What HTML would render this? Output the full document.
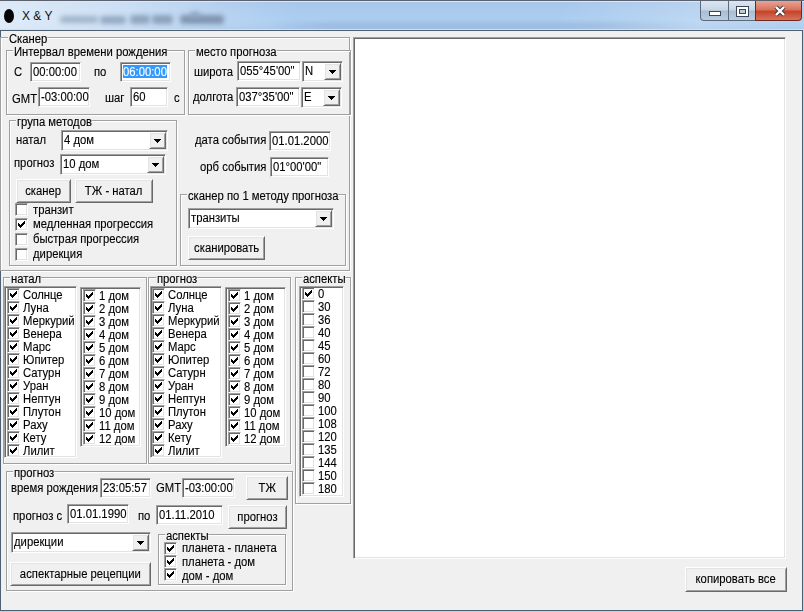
<!DOCTYPE html><html><head><meta charset="utf-8"><style>
*{margin:0;padding:0;box-sizing:border-box}
html,body{width:804px;height:612px;overflow:hidden;background:#bcd3ec;font-family:"Liberation Sans",sans-serif;font-size:12px;color:#000;position:relative}
div,svg{position:absolute}
#tb{left:0;top:0;width:804px;height:30px;border-top:1px solid #2c2f3a;background:linear-gradient(to bottom, rgba(255,255,255,0) 0, rgba(255,255,255,0) 100%), linear-gradient(to right, rgba(244,248,253,.7) 0, rgba(244,248,253,.5) 110px, rgba(244,248,253,.15) 230px, rgba(240,246,252,0) 300px, rgba(240,246,252,0) 560px, rgba(240,246,252,.25) 700px, rgba(240,246,252,.1) 804px), linear-gradient(#a6c6ea 0, #aacbee 40%, #accef0 70%, #a7c7e9 100%);box-shadow:inset 0 1px 0 #dbe8f6, inset 0 -1px 0 #cfe0f2}
#tb:before{content:"";position:absolute;left:0;top:-1px;width:804px;height:1px;background:#5c6170}
#band{left:270px;top:19px;width:420px;height:10px;background:linear-gradient(to bottom, rgba(70,100,140,0) 0, rgba(70,100,140,.13) 60%, rgba(70,100,140,.08) 100%);-webkit-mask-image:linear-gradient(to right, transparent 0, #000 60px, #000 330px, transparent 420px)}
#ico{left:4px;top:9px;width:10px;height:14px;border-radius:50%;background:#050505}
#ttl{left:22px;top:9px;font-size:12px;line-height:14px;color:#101010}
.blb{filter:blur(2.6px);border-radius:3px}
.tbtn{top:1px;height:20px;border:1px solid #5a6a7c;border-top:none;background:linear-gradient(#dce6f2 0%,#c8d6e6 45%,#a9bdd4 55%,#b9cce0 100%)}
.cls{background:linear-gradient(#e8a494 0%,#d9735e 45%,#c7432a 55%,#d6735a 100%);border-color:#6e2a20;border-bottom-right-radius:4px}
#minI{left:8px;top:10px;width:12px;height:5px;background:#fff;border:1px solid #3c4656}
#maxI{left:7px;top:5px;width:13px;height:11px;background:#fff;border:1px solid #3c4656}
#maxI:after{content:"";position:absolute;left:2px;top:2px;width:7px;height:5px;border:1px solid #3c4656;background:#b9cbe0;box-sizing:border-box}
#frame{left:0;top:30px;width:803px;height:581px;background:#f0f0f0;border:1px solid #4e5f72}
.gb{border:1px solid #a0a0a0;box-shadow:1px 1px 0 #fff, inset 1px 1px 0 #fff}
.t{line-height:13px;white-space:nowrap;-webkit-text-stroke:0.12px #000;transform:scaleX(0.94);transform-origin:0 0}
.cap{background:#f0f0f0;padding:0 0 0 1px;margin-left:-1px}
.tc{text-align:center;transform:none}
.tc span{display:inline-block;-webkit-text-stroke:0.12px #000;transform:scaleX(0.94);transform-origin:50% 0}
.sk{border-style:solid;border-width:1px;border-color:#a0a0a0 #fff #fff #a0a0a0;box-shadow:inset 1px 1px 0 #696969, inset -1px -1px 0 #e3e3e3}
.bt{background:#f0f0f0;border-style:solid;border-width:1px;border-color:#fff #696969 #696969 #fff;box-shadow:inset 1px 1px 0 #e3e3e3, inset -1px -1px 0 #a0a0a0}
.arr{fill:#000}
.cb{width:13px;height:13px;background:#fff;border-style:solid;border-width:1px;border-color:#a0a0a0 #fff #fff #a0a0a0;box-shadow:inset 1px 1px 0 #696969, inset -1px -1px 0 #e3e3e3}
.ck{left:2px;top:2px;fill:#000}
</style></head><body><div id="tb"></div>
<div id="band"></div>
<div id="ico"></div>
<div id="ttl">X &amp; Y</div>
<div class="blb" style="left:60px;top:16px;width:38px;height:7px;background:#9fb3ca"></div>
<div class="blb" style="left:100px;top:16px;width:26px;height:8px;background:#93a8c2"></div>
<div class="blb" style="left:130px;top:15px;width:20px;height:9px;background:#8ea3bd"></div>
<div class="blb" style="left:152px;top:15px;width:21px;height:9px;background:#8ba0ba"></div>
<div class="blb" style="left:180px;top:15px;width:44px;height:9px;background:#7f94b0"></div>
<div class="blb" style="left:190px;top:12px;width:10px;height:6px;background:#8fa4be"></div>
<div class="tbtn" style="left:700px;width:29px;border-bottom-left-radius:4px"><div id="minI"></div></div>
<div class="tbtn" style="left:728px;width:28px"><div id="maxI"></div></div>
<div class="tbtn cls" style="left:755px;width:47px"><svg width="14" height="12" viewBox="0 0 14 12" style="position:absolute;left:17px;top:4px"><path d="M3 2 L11 10 M11 2 L3 10" stroke="#3b3b3b" stroke-width="4.2"/><path d="M3 2 L11 10 M11 2 L3 10" stroke="#fff" stroke-width="2.4"/></svg></div>
<div id="frame"></div>
<div class="gb" style="left:0px;top:37px;width:350px;height:234px"></div>
<div class="t cap" style="left:9px;top:33px">Сканер</div>
<div class="gb" style="left:6px;top:50px;width:179px;height:65px"></div>
<div class="t cap" style="left:14px;top:46px">Интервал времени рождения</div>
<div class="t" style="left:14px;top:66px">С</div>
<div class="sk" style="left:30px;top:62px;width:51px;height:20px;background:#fff"></div>
<div class="t" style="left:33px;top:66px;">00:00:00</div>
<div class="t" style="left:94px;top:66px">по</div>
<div class="sk" style="left:120px;top:62px;width:51px;height:20px;background:#fff"></div>
<div style="left:123px;top:65px;width:44px;height:13px;background:#3399ff"></div>
<div class="t" style="left:123px;top:66px;color:#fff;-webkit-text-stroke:0.12px #fff">06:00:00</div>
<div class="t" style="left:12px;top:93px">GMT</div>
<div class="sk" style="left:38px;top:87px;width:52px;height:20px;background:#fff"></div>
<div class="t" style="left:41px;top:91px;">-03:00:00</div>
<div class="t" style="left:105px;top:92px">шаг</div>
<div class="sk" style="left:130px;top:87px;width:38px;height:20px;background:#fff"></div>
<div class="t" style="left:133px;top:91px;">60</div>
<div class="t" style="left:174px;top:92px">с</div>
<div class="gb" style="left:188px;top:50px;width:163px;height:65px"></div>
<div class="t cap" style="left:196px;top:46px">место прогноза</div>
<div class="t" style="left:194px;top:66px">широта</div>
<div class="sk" style="left:237px;top:61px;width:64px;height:20px;background:#fff"></div>
<div class="t" style="left:240px;top:65px;">055°45'00"</div>
<div class="sk" style="left:302px;top:61px;width:41px;height:21px;background:#fff"></div>
<div class="bt" style="left:324px;top:63px;width:17px;height:17px"></div>
<svg class="arr" style="left:329px;top:70px" width="7" height="4" shape-rendering="crispEdges"><rect x="0" y="0" width="7" height="1"/><rect x="1" y="1" width="5" height="1"/><rect x="2" y="2" width="3" height="1"/><rect x="3" y="3" width="1" height="1"/></svg>
<div class="t" style="left:305px;top:65px">N</div>
<div class="t" style="left:193px;top:91px">долгота</div>
<div class="sk" style="left:236px;top:87px;width:64px;height:20px;background:#fff"></div>
<div class="t" style="left:239px;top:91px;">037°35'00"</div>
<div class="sk" style="left:301px;top:87px;width:41px;height:21px;background:#fff"></div>
<div class="bt" style="left:323px;top:89px;width:17px;height:17px"></div>
<svg class="arr" style="left:328px;top:96px" width="7" height="4" shape-rendering="crispEdges"><rect x="0" y="0" width="7" height="1"/><rect x="1" y="1" width="5" height="1"/><rect x="2" y="2" width="3" height="1"/><rect x="3" y="3" width="1" height="1"/></svg>
<div class="t" style="left:304px;top:91px">E</div>
<div class="gb" style="left:9px;top:120px;width:168px;height:146px"></div>
<div class="t cap" style="left:17px;top:116px">група методов</div>
<div class="t" style="left:16px;top:134px">натал</div>
<div class="sk" style="left:61px;top:130px;width:107px;height:21px;background:#fff"></div>
<div class="bt" style="left:149px;top:132px;width:17px;height:17px"></div>
<svg class="arr" style="left:154px;top:139px" width="7" height="4" shape-rendering="crispEdges"><rect x="0" y="0" width="7" height="1"/><rect x="1" y="1" width="5" height="1"/><rect x="2" y="2" width="3" height="1"/><rect x="3" y="3" width="1" height="1"/></svg>
<div class="t" style="left:64px;top:134px">4 дом</div>
<div class="t" style="left:14px;top:157px">прогноз</div>
<div class="sk" style="left:60px;top:154px;width:106px;height:21px;background:#fff"></div>
<div class="bt" style="left:147px;top:156px;width:17px;height:17px"></div>
<svg class="arr" style="left:152px;top:163px" width="7" height="4" shape-rendering="crispEdges"><rect x="0" y="0" width="7" height="1"/><rect x="1" y="1" width="5" height="1"/><rect x="2" y="2" width="3" height="1"/><rect x="3" y="3" width="1" height="1"/></svg>
<div class="t" style="left:63px;top:158px">10 дом</div>
<div class="bt" style="left:16px;top:179px;width:55px;height:24px"></div>
<div class="t tc" style="left:16px;top:185px;width:55px"><span>сканер</span></div>
<div class="bt" style="left:75px;top:179px;width:78px;height:24px"></div>
<div class="t tc" style="left:75px;top:185px;width:78px"><span>ТЖ - натал</span></div>
<div class="cb" style="left:15px;top:203px"></div>
<div class="t" style="left:33px;top:204px">транзит</div>
<div class="cb" style="left:15px;top:218px"><svg class="ck" width="7" height="7" shape-rendering="crispEdges"><rect x="6" y="0" width="1" height="1"/><rect x="5" y="1" width="2" height="1"/><rect x="0" y="2" width="1" height="1"/><rect x="4" y="2" width="3" height="1"/><rect x="0" y="3" width="2" height="1"/><rect x="3" y="3" width="3" height="1"/><rect x="0" y="4" width="5" height="1"/><rect x="1" y="5" width="3" height="1"/><rect x="2" y="6" width="1" height="1"/></svg></div>
<div class="t" style="left:33px;top:218px">медленная прогрессия</div>
<div class="cb" style="left:15px;top:233px"></div>
<div class="t" style="left:33px;top:233px">быстрая прогрессия</div>
<div class="cb" style="left:15px;top:248px"></div>
<div class="t" style="left:33px;top:248px">дирекция</div>
<div class="bt" style="left:16px;top:179px;width:55px;height:24px"></div>
<div class="t tc" style="left:16px;top:185px;width:55px"><span>сканер</span></div>
<div class="bt" style="left:75px;top:179px;width:78px;height:24px"></div>
<div class="t tc" style="left:75px;top:185px;width:78px"><span>ТЖ - натал</span></div>
<div class="t" style="left:195px;top:134px">дата события</div>
<div class="sk" style="left:269px;top:131px;width:62px;height:20px;background:#fff"></div>
<div class="t" style="left:272px;top:135px;">01.01.2000</div>
<div class="t" style="left:200px;top:161px">орб события</div>
<div class="sk" style="left:270px;top:157px;width:59px;height:20px;background:#fff"></div>
<div class="t" style="left:273px;top:161px;">01°00'00"</div>
<div class="gb" style="left:180px;top:194px;width:166px;height:72px"></div>
<div class="t cap" style="left:188px;top:190px">сканер по 1 методу прогноза</div>
<div class="sk" style="left:188px;top:208px;width:146px;height:21px;background:#fff"></div>
<div class="bt" style="left:315px;top:210px;width:17px;height:17px"></div>
<svg class="arr" style="left:320px;top:217px" width="7" height="4" shape-rendering="crispEdges"><rect x="0" y="0" width="7" height="1"/><rect x="1" y="1" width="5" height="1"/><rect x="2" y="2" width="3" height="1"/><rect x="3" y="3" width="1" height="1"/></svg>
<div class="t" style="left:191px;top:212px">транзиты</div>
<div class="bt" style="left:188px;top:236px;width:77px;height:24px"></div>
<div class="t tc" style="left:188px;top:242px;width:77px"><span>сканировать</span></div>
<div class="gb" style="left:3px;top:277px;width:144px;height:187px"></div>
<div class="t cap" style="left:11px;top:273px">натал</div>
<div class="sk" style="left:4px;top:286px;width:73px;height:172px;background:#fff"></div>
<div style="left:6px;top:288px;width:69px;height:168px;overflow:hidden"><div class="cb" style="left:1px;top:0px"><svg class="ck" width="7" height="7" shape-rendering="crispEdges"><rect x="6" y="0" width="1" height="1"/><rect x="5" y="1" width="2" height="1"/><rect x="0" y="2" width="1" height="1"/><rect x="4" y="2" width="3" height="1"/><rect x="0" y="3" width="2" height="1"/><rect x="3" y="3" width="3" height="1"/><rect x="0" y="4" width="5" height="1"/><rect x="1" y="5" width="3" height="1"/><rect x="2" y="6" width="1" height="1"/></svg></div><div class="t" style="left:17px;top:1px">Солнце</div><div class="cb" style="left:1px;top:13px"><svg class="ck" width="7" height="7" shape-rendering="crispEdges"><rect x="6" y="0" width="1" height="1"/><rect x="5" y="1" width="2" height="1"/><rect x="0" y="2" width="1" height="1"/><rect x="4" y="2" width="3" height="1"/><rect x="0" y="3" width="2" height="1"/><rect x="3" y="3" width="3" height="1"/><rect x="0" y="4" width="5" height="1"/><rect x="1" y="5" width="3" height="1"/><rect x="2" y="6" width="1" height="1"/></svg></div><div class="t" style="left:17px;top:14px">Луна</div><div class="cb" style="left:1px;top:26px"><svg class="ck" width="7" height="7" shape-rendering="crispEdges"><rect x="6" y="0" width="1" height="1"/><rect x="5" y="1" width="2" height="1"/><rect x="0" y="2" width="1" height="1"/><rect x="4" y="2" width="3" height="1"/><rect x="0" y="3" width="2" height="1"/><rect x="3" y="3" width="3" height="1"/><rect x="0" y="4" width="5" height="1"/><rect x="1" y="5" width="3" height="1"/><rect x="2" y="6" width="1" height="1"/></svg></div><div class="t" style="left:17px;top:27px">Меркурий</div><div class="cb" style="left:1px;top:39px"><svg class="ck" width="7" height="7" shape-rendering="crispEdges"><rect x="6" y="0" width="1" height="1"/><rect x="5" y="1" width="2" height="1"/><rect x="0" y="2" width="1" height="1"/><rect x="4" y="2" width="3" height="1"/><rect x="0" y="3" width="2" height="1"/><rect x="3" y="3" width="3" height="1"/><rect x="0" y="4" width="5" height="1"/><rect x="1" y="5" width="3" height="1"/><rect x="2" y="6" width="1" height="1"/></svg></div><div class="t" style="left:17px;top:40px">Венера</div><div class="cb" style="left:1px;top:52px"><svg class="ck" width="7" height="7" shape-rendering="crispEdges"><rect x="6" y="0" width="1" height="1"/><rect x="5" y="1" width="2" height="1"/><rect x="0" y="2" width="1" height="1"/><rect x="4" y="2" width="3" height="1"/><rect x="0" y="3" width="2" height="1"/><rect x="3" y="3" width="3" height="1"/><rect x="0" y="4" width="5" height="1"/><rect x="1" y="5" width="3" height="1"/><rect x="2" y="6" width="1" height="1"/></svg></div><div class="t" style="left:17px;top:53px">Марс</div><div class="cb" style="left:1px;top:65px"><svg class="ck" width="7" height="7" shape-rendering="crispEdges"><rect x="6" y="0" width="1" height="1"/><rect x="5" y="1" width="2" height="1"/><rect x="0" y="2" width="1" height="1"/><rect x="4" y="2" width="3" height="1"/><rect x="0" y="3" width="2" height="1"/><rect x="3" y="3" width="3" height="1"/><rect x="0" y="4" width="5" height="1"/><rect x="1" y="5" width="3" height="1"/><rect x="2" y="6" width="1" height="1"/></svg></div><div class="t" style="left:17px;top:66px">Юпитер</div><div class="cb" style="left:1px;top:78px"><svg class="ck" width="7" height="7" shape-rendering="crispEdges"><rect x="6" y="0" width="1" height="1"/><rect x="5" y="1" width="2" height="1"/><rect x="0" y="2" width="1" height="1"/><rect x="4" y="2" width="3" height="1"/><rect x="0" y="3" width="2" height="1"/><rect x="3" y="3" width="3" height="1"/><rect x="0" y="4" width="5" height="1"/><rect x="1" y="5" width="3" height="1"/><rect x="2" y="6" width="1" height="1"/></svg></div><div class="t" style="left:17px;top:79px">Сатурн</div><div class="cb" style="left:1px;top:91px"><svg class="ck" width="7" height="7" shape-rendering="crispEdges"><rect x="6" y="0" width="1" height="1"/><rect x="5" y="1" width="2" height="1"/><rect x="0" y="2" width="1" height="1"/><rect x="4" y="2" width="3" height="1"/><rect x="0" y="3" width="2" height="1"/><rect x="3" y="3" width="3" height="1"/><rect x="0" y="4" width="5" height="1"/><rect x="1" y="5" width="3" height="1"/><rect x="2" y="6" width="1" height="1"/></svg></div><div class="t" style="left:17px;top:92px">Уран</div><div class="cb" style="left:1px;top:104px"><svg class="ck" width="7" height="7" shape-rendering="crispEdges"><rect x="6" y="0" width="1" height="1"/><rect x="5" y="1" width="2" height="1"/><rect x="0" y="2" width="1" height="1"/><rect x="4" y="2" width="3" height="1"/><rect x="0" y="3" width="2" height="1"/><rect x="3" y="3" width="3" height="1"/><rect x="0" y="4" width="5" height="1"/><rect x="1" y="5" width="3" height="1"/><rect x="2" y="6" width="1" height="1"/></svg></div><div class="t" style="left:17px;top:105px">Нептун</div><div class="cb" style="left:1px;top:117px"><svg class="ck" width="7" height="7" shape-rendering="crispEdges"><rect x="6" y="0" width="1" height="1"/><rect x="5" y="1" width="2" height="1"/><rect x="0" y="2" width="1" height="1"/><rect x="4" y="2" width="3" height="1"/><rect x="0" y="3" width="2" height="1"/><rect x="3" y="3" width="3" height="1"/><rect x="0" y="4" width="5" height="1"/><rect x="1" y="5" width="3" height="1"/><rect x="2" y="6" width="1" height="1"/></svg></div><div class="t" style="left:17px;top:118px">Плутон</div><div class="cb" style="left:1px;top:130px"><svg class="ck" width="7" height="7" shape-rendering="crispEdges"><rect x="6" y="0" width="1" height="1"/><rect x="5" y="1" width="2" height="1"/><rect x="0" y="2" width="1" height="1"/><rect x="4" y="2" width="3" height="1"/><rect x="0" y="3" width="2" height="1"/><rect x="3" y="3" width="3" height="1"/><rect x="0" y="4" width="5" height="1"/><rect x="1" y="5" width="3" height="1"/><rect x="2" y="6" width="1" height="1"/></svg></div><div class="t" style="left:17px;top:131px">Раху</div><div class="cb" style="left:1px;top:143px"><svg class="ck" width="7" height="7" shape-rendering="crispEdges"><rect x="6" y="0" width="1" height="1"/><rect x="5" y="1" width="2" height="1"/><rect x="0" y="2" width="1" height="1"/><rect x="4" y="2" width="3" height="1"/><rect x="0" y="3" width="2" height="1"/><rect x="3" y="3" width="3" height="1"/><rect x="0" y="4" width="5" height="1"/><rect x="1" y="5" width="3" height="1"/><rect x="2" y="6" width="1" height="1"/></svg></div><div class="t" style="left:17px;top:144px">Кету</div><div class="cb" style="left:1px;top:156px"><svg class="ck" width="7" height="7" shape-rendering="crispEdges"><rect x="6" y="0" width="1" height="1"/><rect x="5" y="1" width="2" height="1"/><rect x="0" y="2" width="1" height="1"/><rect x="4" y="2" width="3" height="1"/><rect x="0" y="3" width="2" height="1"/><rect x="3" y="3" width="3" height="1"/><rect x="0" y="4" width="5" height="1"/><rect x="1" y="5" width="3" height="1"/><rect x="2" y="6" width="1" height="1"/></svg></div><div class="t" style="left:17px;top:157px">Лилит</div></div>
<div class="sk" style="left:80px;top:287px;width:61px;height:160px;background:#fff"></div>
<div style="left:82px;top:289px;width:57px;height:156px;overflow:hidden"><div class="cb" style="left:1px;top:0px"><svg class="ck" width="7" height="7" shape-rendering="crispEdges"><rect x="6" y="0" width="1" height="1"/><rect x="5" y="1" width="2" height="1"/><rect x="0" y="2" width="1" height="1"/><rect x="4" y="2" width="3" height="1"/><rect x="0" y="3" width="2" height="1"/><rect x="3" y="3" width="3" height="1"/><rect x="0" y="4" width="5" height="1"/><rect x="1" y="5" width="3" height="1"/><rect x="2" y="6" width="1" height="1"/></svg></div><div class="t" style="left:17px;top:1px">1 дом</div><div class="cb" style="left:1px;top:13px"><svg class="ck" width="7" height="7" shape-rendering="crispEdges"><rect x="6" y="0" width="1" height="1"/><rect x="5" y="1" width="2" height="1"/><rect x="0" y="2" width="1" height="1"/><rect x="4" y="2" width="3" height="1"/><rect x="0" y="3" width="2" height="1"/><rect x="3" y="3" width="3" height="1"/><rect x="0" y="4" width="5" height="1"/><rect x="1" y="5" width="3" height="1"/><rect x="2" y="6" width="1" height="1"/></svg></div><div class="t" style="left:17px;top:14px">2 дом</div><div class="cb" style="left:1px;top:26px"><svg class="ck" width="7" height="7" shape-rendering="crispEdges"><rect x="6" y="0" width="1" height="1"/><rect x="5" y="1" width="2" height="1"/><rect x="0" y="2" width="1" height="1"/><rect x="4" y="2" width="3" height="1"/><rect x="0" y="3" width="2" height="1"/><rect x="3" y="3" width="3" height="1"/><rect x="0" y="4" width="5" height="1"/><rect x="1" y="5" width="3" height="1"/><rect x="2" y="6" width="1" height="1"/></svg></div><div class="t" style="left:17px;top:27px">3 дом</div><div class="cb" style="left:1px;top:39px"><svg class="ck" width="7" height="7" shape-rendering="crispEdges"><rect x="6" y="0" width="1" height="1"/><rect x="5" y="1" width="2" height="1"/><rect x="0" y="2" width="1" height="1"/><rect x="4" y="2" width="3" height="1"/><rect x="0" y="3" width="2" height="1"/><rect x="3" y="3" width="3" height="1"/><rect x="0" y="4" width="5" height="1"/><rect x="1" y="5" width="3" height="1"/><rect x="2" y="6" width="1" height="1"/></svg></div><div class="t" style="left:17px;top:40px">4 дом</div><div class="cb" style="left:1px;top:52px"><svg class="ck" width="7" height="7" shape-rendering="crispEdges"><rect x="6" y="0" width="1" height="1"/><rect x="5" y="1" width="2" height="1"/><rect x="0" y="2" width="1" height="1"/><rect x="4" y="2" width="3" height="1"/><rect x="0" y="3" width="2" height="1"/><rect x="3" y="3" width="3" height="1"/><rect x="0" y="4" width="5" height="1"/><rect x="1" y="5" width="3" height="1"/><rect x="2" y="6" width="1" height="1"/></svg></div><div class="t" style="left:17px;top:53px">5 дом</div><div class="cb" style="left:1px;top:65px"><svg class="ck" width="7" height="7" shape-rendering="crispEdges"><rect x="6" y="0" width="1" height="1"/><rect x="5" y="1" width="2" height="1"/><rect x="0" y="2" width="1" height="1"/><rect x="4" y="2" width="3" height="1"/><rect x="0" y="3" width="2" height="1"/><rect x="3" y="3" width="3" height="1"/><rect x="0" y="4" width="5" height="1"/><rect x="1" y="5" width="3" height="1"/><rect x="2" y="6" width="1" height="1"/></svg></div><div class="t" style="left:17px;top:66px">6 дом</div><div class="cb" style="left:1px;top:78px"><svg class="ck" width="7" height="7" shape-rendering="crispEdges"><rect x="6" y="0" width="1" height="1"/><rect x="5" y="1" width="2" height="1"/><rect x="0" y="2" width="1" height="1"/><rect x="4" y="2" width="3" height="1"/><rect x="0" y="3" width="2" height="1"/><rect x="3" y="3" width="3" height="1"/><rect x="0" y="4" width="5" height="1"/><rect x="1" y="5" width="3" height="1"/><rect x="2" y="6" width="1" height="1"/></svg></div><div class="t" style="left:17px;top:79px">7 дом</div><div class="cb" style="left:1px;top:91px"><svg class="ck" width="7" height="7" shape-rendering="crispEdges"><rect x="6" y="0" width="1" height="1"/><rect x="5" y="1" width="2" height="1"/><rect x="0" y="2" width="1" height="1"/><rect x="4" y="2" width="3" height="1"/><rect x="0" y="3" width="2" height="1"/><rect x="3" y="3" width="3" height="1"/><rect x="0" y="4" width="5" height="1"/><rect x="1" y="5" width="3" height="1"/><rect x="2" y="6" width="1" height="1"/></svg></div><div class="t" style="left:17px;top:92px">8 дом</div><div class="cb" style="left:1px;top:104px"><svg class="ck" width="7" height="7" shape-rendering="crispEdges"><rect x="6" y="0" width="1" height="1"/><rect x="5" y="1" width="2" height="1"/><rect x="0" y="2" width="1" height="1"/><rect x="4" y="2" width="3" height="1"/><rect x="0" y="3" width="2" height="1"/><rect x="3" y="3" width="3" height="1"/><rect x="0" y="4" width="5" height="1"/><rect x="1" y="5" width="3" height="1"/><rect x="2" y="6" width="1" height="1"/></svg></div><div class="t" style="left:17px;top:105px">9 дом</div><div class="cb" style="left:1px;top:117px"><svg class="ck" width="7" height="7" shape-rendering="crispEdges"><rect x="6" y="0" width="1" height="1"/><rect x="5" y="1" width="2" height="1"/><rect x="0" y="2" width="1" height="1"/><rect x="4" y="2" width="3" height="1"/><rect x="0" y="3" width="2" height="1"/><rect x="3" y="3" width="3" height="1"/><rect x="0" y="4" width="5" height="1"/><rect x="1" y="5" width="3" height="1"/><rect x="2" y="6" width="1" height="1"/></svg></div><div class="t" style="left:17px;top:118px">10 дом</div><div class="cb" style="left:1px;top:130px"><svg class="ck" width="7" height="7" shape-rendering="crispEdges"><rect x="6" y="0" width="1" height="1"/><rect x="5" y="1" width="2" height="1"/><rect x="0" y="2" width="1" height="1"/><rect x="4" y="2" width="3" height="1"/><rect x="0" y="3" width="2" height="1"/><rect x="3" y="3" width="3" height="1"/><rect x="0" y="4" width="5" height="1"/><rect x="1" y="5" width="3" height="1"/><rect x="2" y="6" width="1" height="1"/></svg></div><div class="t" style="left:17px;top:131px">11 дом</div><div class="cb" style="left:1px;top:143px"><svg class="ck" width="7" height="7" shape-rendering="crispEdges"><rect x="6" y="0" width="1" height="1"/><rect x="5" y="1" width="2" height="1"/><rect x="0" y="2" width="1" height="1"/><rect x="4" y="2" width="3" height="1"/><rect x="0" y="3" width="2" height="1"/><rect x="3" y="3" width="3" height="1"/><rect x="0" y="4" width="5" height="1"/><rect x="1" y="5" width="3" height="1"/><rect x="2" y="6" width="1" height="1"/></svg></div><div class="t" style="left:17px;top:144px">12 дом</div></div>
<div class="gb" style="left:148px;top:277px;width:143px;height:187px"></div>
<div class="t cap" style="left:157px;top:273px">прогноз</div>
<div class="sk" style="left:150px;top:286px;width:72px;height:172px;background:#fff"></div>
<div style="left:152px;top:288px;width:68px;height:168px;overflow:hidden"><div class="cb" style="left:0px;top:0px"><svg class="ck" width="7" height="7" shape-rendering="crispEdges"><rect x="6" y="0" width="1" height="1"/><rect x="5" y="1" width="2" height="1"/><rect x="0" y="2" width="1" height="1"/><rect x="4" y="2" width="3" height="1"/><rect x="0" y="3" width="2" height="1"/><rect x="3" y="3" width="3" height="1"/><rect x="0" y="4" width="5" height="1"/><rect x="1" y="5" width="3" height="1"/><rect x="2" y="6" width="1" height="1"/></svg></div><div class="t" style="left:16px;top:1px">Солнце</div><div class="cb" style="left:0px;top:13px"><svg class="ck" width="7" height="7" shape-rendering="crispEdges"><rect x="6" y="0" width="1" height="1"/><rect x="5" y="1" width="2" height="1"/><rect x="0" y="2" width="1" height="1"/><rect x="4" y="2" width="3" height="1"/><rect x="0" y="3" width="2" height="1"/><rect x="3" y="3" width="3" height="1"/><rect x="0" y="4" width="5" height="1"/><rect x="1" y="5" width="3" height="1"/><rect x="2" y="6" width="1" height="1"/></svg></div><div class="t" style="left:16px;top:14px">Луна</div><div class="cb" style="left:0px;top:26px"><svg class="ck" width="7" height="7" shape-rendering="crispEdges"><rect x="6" y="0" width="1" height="1"/><rect x="5" y="1" width="2" height="1"/><rect x="0" y="2" width="1" height="1"/><rect x="4" y="2" width="3" height="1"/><rect x="0" y="3" width="2" height="1"/><rect x="3" y="3" width="3" height="1"/><rect x="0" y="4" width="5" height="1"/><rect x="1" y="5" width="3" height="1"/><rect x="2" y="6" width="1" height="1"/></svg></div><div class="t" style="left:16px;top:27px">Меркурий</div><div class="cb" style="left:0px;top:39px"><svg class="ck" width="7" height="7" shape-rendering="crispEdges"><rect x="6" y="0" width="1" height="1"/><rect x="5" y="1" width="2" height="1"/><rect x="0" y="2" width="1" height="1"/><rect x="4" y="2" width="3" height="1"/><rect x="0" y="3" width="2" height="1"/><rect x="3" y="3" width="3" height="1"/><rect x="0" y="4" width="5" height="1"/><rect x="1" y="5" width="3" height="1"/><rect x="2" y="6" width="1" height="1"/></svg></div><div class="t" style="left:16px;top:40px">Венера</div><div class="cb" style="left:0px;top:52px"><svg class="ck" width="7" height="7" shape-rendering="crispEdges"><rect x="6" y="0" width="1" height="1"/><rect x="5" y="1" width="2" height="1"/><rect x="0" y="2" width="1" height="1"/><rect x="4" y="2" width="3" height="1"/><rect x="0" y="3" width="2" height="1"/><rect x="3" y="3" width="3" height="1"/><rect x="0" y="4" width="5" height="1"/><rect x="1" y="5" width="3" height="1"/><rect x="2" y="6" width="1" height="1"/></svg></div><div class="t" style="left:16px;top:53px">Марс</div><div class="cb" style="left:0px;top:65px"><svg class="ck" width="7" height="7" shape-rendering="crispEdges"><rect x="6" y="0" width="1" height="1"/><rect x="5" y="1" width="2" height="1"/><rect x="0" y="2" width="1" height="1"/><rect x="4" y="2" width="3" height="1"/><rect x="0" y="3" width="2" height="1"/><rect x="3" y="3" width="3" height="1"/><rect x="0" y="4" width="5" height="1"/><rect x="1" y="5" width="3" height="1"/><rect x="2" y="6" width="1" height="1"/></svg></div><div class="t" style="left:16px;top:66px">Юпитер</div><div class="cb" style="left:0px;top:78px"><svg class="ck" width="7" height="7" shape-rendering="crispEdges"><rect x="6" y="0" width="1" height="1"/><rect x="5" y="1" width="2" height="1"/><rect x="0" y="2" width="1" height="1"/><rect x="4" y="2" width="3" height="1"/><rect x="0" y="3" width="2" height="1"/><rect x="3" y="3" width="3" height="1"/><rect x="0" y="4" width="5" height="1"/><rect x="1" y="5" width="3" height="1"/><rect x="2" y="6" width="1" height="1"/></svg></div><div class="t" style="left:16px;top:79px">Сатурн</div><div class="cb" style="left:0px;top:91px"><svg class="ck" width="7" height="7" shape-rendering="crispEdges"><rect x="6" y="0" width="1" height="1"/><rect x="5" y="1" width="2" height="1"/><rect x="0" y="2" width="1" height="1"/><rect x="4" y="2" width="3" height="1"/><rect x="0" y="3" width="2" height="1"/><rect x="3" y="3" width="3" height="1"/><rect x="0" y="4" width="5" height="1"/><rect x="1" y="5" width="3" height="1"/><rect x="2" y="6" width="1" height="1"/></svg></div><div class="t" style="left:16px;top:92px">Уран</div><div class="cb" style="left:0px;top:104px"><svg class="ck" width="7" height="7" shape-rendering="crispEdges"><rect x="6" y="0" width="1" height="1"/><rect x="5" y="1" width="2" height="1"/><rect x="0" y="2" width="1" height="1"/><rect x="4" y="2" width="3" height="1"/><rect x="0" y="3" width="2" height="1"/><rect x="3" y="3" width="3" height="1"/><rect x="0" y="4" width="5" height="1"/><rect x="1" y="5" width="3" height="1"/><rect x="2" y="6" width="1" height="1"/></svg></div><div class="t" style="left:16px;top:105px">Нептун</div><div class="cb" style="left:0px;top:117px"><svg class="ck" width="7" height="7" shape-rendering="crispEdges"><rect x="6" y="0" width="1" height="1"/><rect x="5" y="1" width="2" height="1"/><rect x="0" y="2" width="1" height="1"/><rect x="4" y="2" width="3" height="1"/><rect x="0" y="3" width="2" height="1"/><rect x="3" y="3" width="3" height="1"/><rect x="0" y="4" width="5" height="1"/><rect x="1" y="5" width="3" height="1"/><rect x="2" y="6" width="1" height="1"/></svg></div><div class="t" style="left:16px;top:118px">Плутон</div><div class="cb" style="left:0px;top:130px"><svg class="ck" width="7" height="7" shape-rendering="crispEdges"><rect x="6" y="0" width="1" height="1"/><rect x="5" y="1" width="2" height="1"/><rect x="0" y="2" width="1" height="1"/><rect x="4" y="2" width="3" height="1"/><rect x="0" y="3" width="2" height="1"/><rect x="3" y="3" width="3" height="1"/><rect x="0" y="4" width="5" height="1"/><rect x="1" y="5" width="3" height="1"/><rect x="2" y="6" width="1" height="1"/></svg></div><div class="t" style="left:16px;top:131px">Раху</div><div class="cb" style="left:0px;top:143px"><svg class="ck" width="7" height="7" shape-rendering="crispEdges"><rect x="6" y="0" width="1" height="1"/><rect x="5" y="1" width="2" height="1"/><rect x="0" y="2" width="1" height="1"/><rect x="4" y="2" width="3" height="1"/><rect x="0" y="3" width="2" height="1"/><rect x="3" y="3" width="3" height="1"/><rect x="0" y="4" width="5" height="1"/><rect x="1" y="5" width="3" height="1"/><rect x="2" y="6" width="1" height="1"/></svg></div><div class="t" style="left:16px;top:144px">Кету</div><div class="cb" style="left:0px;top:156px"><svg class="ck" width="7" height="7" shape-rendering="crispEdges"><rect x="6" y="0" width="1" height="1"/><rect x="5" y="1" width="2" height="1"/><rect x="0" y="2" width="1" height="1"/><rect x="4" y="2" width="3" height="1"/><rect x="0" y="3" width="2" height="1"/><rect x="3" y="3" width="3" height="1"/><rect x="0" y="4" width="5" height="1"/><rect x="1" y="5" width="3" height="1"/><rect x="2" y="6" width="1" height="1"/></svg></div><div class="t" style="left:16px;top:157px">Лилит</div></div>
<div class="sk" style="left:225px;top:287px;width:61px;height:160px;background:#fff"></div>
<div style="left:227px;top:289px;width:57px;height:156px;overflow:hidden"><div class="cb" style="left:1px;top:0px"><svg class="ck" width="7" height="7" shape-rendering="crispEdges"><rect x="6" y="0" width="1" height="1"/><rect x="5" y="1" width="2" height="1"/><rect x="0" y="2" width="1" height="1"/><rect x="4" y="2" width="3" height="1"/><rect x="0" y="3" width="2" height="1"/><rect x="3" y="3" width="3" height="1"/><rect x="0" y="4" width="5" height="1"/><rect x="1" y="5" width="3" height="1"/><rect x="2" y="6" width="1" height="1"/></svg></div><div class="t" style="left:17px;top:1px">1 дом</div><div class="cb" style="left:1px;top:13px"><svg class="ck" width="7" height="7" shape-rendering="crispEdges"><rect x="6" y="0" width="1" height="1"/><rect x="5" y="1" width="2" height="1"/><rect x="0" y="2" width="1" height="1"/><rect x="4" y="2" width="3" height="1"/><rect x="0" y="3" width="2" height="1"/><rect x="3" y="3" width="3" height="1"/><rect x="0" y="4" width="5" height="1"/><rect x="1" y="5" width="3" height="1"/><rect x="2" y="6" width="1" height="1"/></svg></div><div class="t" style="left:17px;top:14px">2 дом</div><div class="cb" style="left:1px;top:26px"><svg class="ck" width="7" height="7" shape-rendering="crispEdges"><rect x="6" y="0" width="1" height="1"/><rect x="5" y="1" width="2" height="1"/><rect x="0" y="2" width="1" height="1"/><rect x="4" y="2" width="3" height="1"/><rect x="0" y="3" width="2" height="1"/><rect x="3" y="3" width="3" height="1"/><rect x="0" y="4" width="5" height="1"/><rect x="1" y="5" width="3" height="1"/><rect x="2" y="6" width="1" height="1"/></svg></div><div class="t" style="left:17px;top:27px">3 дом</div><div class="cb" style="left:1px;top:39px"><svg class="ck" width="7" height="7" shape-rendering="crispEdges"><rect x="6" y="0" width="1" height="1"/><rect x="5" y="1" width="2" height="1"/><rect x="0" y="2" width="1" height="1"/><rect x="4" y="2" width="3" height="1"/><rect x="0" y="3" width="2" height="1"/><rect x="3" y="3" width="3" height="1"/><rect x="0" y="4" width="5" height="1"/><rect x="1" y="5" width="3" height="1"/><rect x="2" y="6" width="1" height="1"/></svg></div><div class="t" style="left:17px;top:40px">4 дом</div><div class="cb" style="left:1px;top:52px"><svg class="ck" width="7" height="7" shape-rendering="crispEdges"><rect x="6" y="0" width="1" height="1"/><rect x="5" y="1" width="2" height="1"/><rect x="0" y="2" width="1" height="1"/><rect x="4" y="2" width="3" height="1"/><rect x="0" y="3" width="2" height="1"/><rect x="3" y="3" width="3" height="1"/><rect x="0" y="4" width="5" height="1"/><rect x="1" y="5" width="3" height="1"/><rect x="2" y="6" width="1" height="1"/></svg></div><div class="t" style="left:17px;top:53px">5 дом</div><div class="cb" style="left:1px;top:65px"><svg class="ck" width="7" height="7" shape-rendering="crispEdges"><rect x="6" y="0" width="1" height="1"/><rect x="5" y="1" width="2" height="1"/><rect x="0" y="2" width="1" height="1"/><rect x="4" y="2" width="3" height="1"/><rect x="0" y="3" width="2" height="1"/><rect x="3" y="3" width="3" height="1"/><rect x="0" y="4" width="5" height="1"/><rect x="1" y="5" width="3" height="1"/><rect x="2" y="6" width="1" height="1"/></svg></div><div class="t" style="left:17px;top:66px">6 дом</div><div class="cb" style="left:1px;top:78px"><svg class="ck" width="7" height="7" shape-rendering="crispEdges"><rect x="6" y="0" width="1" height="1"/><rect x="5" y="1" width="2" height="1"/><rect x="0" y="2" width="1" height="1"/><rect x="4" y="2" width="3" height="1"/><rect x="0" y="3" width="2" height="1"/><rect x="3" y="3" width="3" height="1"/><rect x="0" y="4" width="5" height="1"/><rect x="1" y="5" width="3" height="1"/><rect x="2" y="6" width="1" height="1"/></svg></div><div class="t" style="left:17px;top:79px">7 дом</div><div class="cb" style="left:1px;top:91px"><svg class="ck" width="7" height="7" shape-rendering="crispEdges"><rect x="6" y="0" width="1" height="1"/><rect x="5" y="1" width="2" height="1"/><rect x="0" y="2" width="1" height="1"/><rect x="4" y="2" width="3" height="1"/><rect x="0" y="3" width="2" height="1"/><rect x="3" y="3" width="3" height="1"/><rect x="0" y="4" width="5" height="1"/><rect x="1" y="5" width="3" height="1"/><rect x="2" y="6" width="1" height="1"/></svg></div><div class="t" style="left:17px;top:92px">8 дом</div><div class="cb" style="left:1px;top:104px"><svg class="ck" width="7" height="7" shape-rendering="crispEdges"><rect x="6" y="0" width="1" height="1"/><rect x="5" y="1" width="2" height="1"/><rect x="0" y="2" width="1" height="1"/><rect x="4" y="2" width="3" height="1"/><rect x="0" y="3" width="2" height="1"/><rect x="3" y="3" width="3" height="1"/><rect x="0" y="4" width="5" height="1"/><rect x="1" y="5" width="3" height="1"/><rect x="2" y="6" width="1" height="1"/></svg></div><div class="t" style="left:17px;top:105px">9 дом</div><div class="cb" style="left:1px;top:117px"><svg class="ck" width="7" height="7" shape-rendering="crispEdges"><rect x="6" y="0" width="1" height="1"/><rect x="5" y="1" width="2" height="1"/><rect x="0" y="2" width="1" height="1"/><rect x="4" y="2" width="3" height="1"/><rect x="0" y="3" width="2" height="1"/><rect x="3" y="3" width="3" height="1"/><rect x="0" y="4" width="5" height="1"/><rect x="1" y="5" width="3" height="1"/><rect x="2" y="6" width="1" height="1"/></svg></div><div class="t" style="left:17px;top:118px">10 дом</div><div class="cb" style="left:1px;top:130px"><svg class="ck" width="7" height="7" shape-rendering="crispEdges"><rect x="6" y="0" width="1" height="1"/><rect x="5" y="1" width="2" height="1"/><rect x="0" y="2" width="1" height="1"/><rect x="4" y="2" width="3" height="1"/><rect x="0" y="3" width="2" height="1"/><rect x="3" y="3" width="3" height="1"/><rect x="0" y="4" width="5" height="1"/><rect x="1" y="5" width="3" height="1"/><rect x="2" y="6" width="1" height="1"/></svg></div><div class="t" style="left:17px;top:131px">11 дом</div><div class="cb" style="left:1px;top:143px"><svg class="ck" width="7" height="7" shape-rendering="crispEdges"><rect x="6" y="0" width="1" height="1"/><rect x="5" y="1" width="2" height="1"/><rect x="0" y="2" width="1" height="1"/><rect x="4" y="2" width="3" height="1"/><rect x="0" y="3" width="2" height="1"/><rect x="3" y="3" width="3" height="1"/><rect x="0" y="4" width="5" height="1"/><rect x="1" y="5" width="3" height="1"/><rect x="2" y="6" width="1" height="1"/></svg></div><div class="t" style="left:17px;top:144px">12 дом</div></div>
<div class="gb" style="left:295px;top:277px;width:56px;height:227px"></div>
<div class="t cap" style="left:303px;top:273px">аспекты</div>
<div class="sk" style="left:299px;top:286px;width:45px;height:211px;background:#fff"></div>
<div style="left:301px;top:288px;width:41px;height:207px;overflow:hidden"><div class="cb" style="left:1px;top:-1px"><svg class="ck" width="7" height="7" shape-rendering="crispEdges"><rect x="6" y="0" width="1" height="1"/><rect x="5" y="1" width="2" height="1"/><rect x="0" y="2" width="1" height="1"/><rect x="4" y="2" width="3" height="1"/><rect x="0" y="3" width="2" height="1"/><rect x="3" y="3" width="3" height="1"/><rect x="0" y="4" width="5" height="1"/><rect x="1" y="5" width="3" height="1"/><rect x="2" y="6" width="1" height="1"/></svg></div><div class="t" style="left:17px;top:0px">0</div><div class="cb" style="left:1px;top:12px"></div><div class="t" style="left:17px;top:13px">30</div><div class="cb" style="left:1px;top:25px"></div><div class="t" style="left:17px;top:26px">36</div><div class="cb" style="left:1px;top:38px"></div><div class="t" style="left:17px;top:39px">40</div><div class="cb" style="left:1px;top:51px"></div><div class="t" style="left:17px;top:52px">45</div><div class="cb" style="left:1px;top:64px"></div><div class="t" style="left:17px;top:65px">60</div><div class="cb" style="left:1px;top:77px"></div><div class="t" style="left:17px;top:78px">72</div><div class="cb" style="left:1px;top:90px"></div><div class="t" style="left:17px;top:91px">80</div><div class="cb" style="left:1px;top:103px"></div><div class="t" style="left:17px;top:104px">90</div><div class="cb" style="left:1px;top:116px"></div><div class="t" style="left:17px;top:117px">100</div><div class="cb" style="left:1px;top:129px"></div><div class="t" style="left:17px;top:130px">108</div><div class="cb" style="left:1px;top:142px"></div><div class="t" style="left:17px;top:143px">120</div><div class="cb" style="left:1px;top:155px"></div><div class="t" style="left:17px;top:156px">135</div><div class="cb" style="left:1px;top:168px"></div><div class="t" style="left:17px;top:169px">144</div><div class="cb" style="left:1px;top:181px"></div><div class="t" style="left:17px;top:182px">150</div><div class="cb" style="left:1px;top:194px"></div><div class="t" style="left:17px;top:195px">180</div></div>
<div class="gb" style="left:6px;top:471px;width:287px;height:120px"></div>
<div class="t cap" style="left:14px;top:467px">прогноз</div>
<div class="t" style="left:11px;top:482px">время рождения</div>
<div class="sk" style="left:100px;top:478px;width:51px;height:20px;background:#fff"></div>
<div class="t" style="left:103px;top:482px;">23:05:57</div>
<div class="t" style="left:156px;top:482px">GMT</div>
<div class="sk" style="left:182px;top:478px;width:53px;height:20px;background:#fff"></div>
<div class="t" style="left:185px;top:482px;">-03:00:00</div>
<div class="bt" style="left:246px;top:476px;width:42px;height:24px"></div>
<div class="t tc" style="left:246px;top:482px;width:42px"><span>ТЖ</span></div>
<div class="t" style="left:13px;top:510px">прогноз с</div>
<div class="sk" style="left:67px;top:504px;width:62px;height:20px;background:#fff"></div>
<div class="t" style="left:70px;top:508px;">01.01.1990</div>
<div class="t" style="left:138px;top:510px">по</div>
<div class="sk" style="left:156px;top:505px;width:67px;height:20px;background:#fff"></div>
<div class="t" style="left:159px;top:509px;">01.11.2010</div>
<div class="bt" style="left:228px;top:505px;width:59px;height:24px"></div>
<div class="t tc" style="left:228px;top:511px;width:59px"><span>прогноз</span></div>
<div class="sk" style="left:11px;top:532px;width:140px;height:21px;background:#fff"></div>
<div class="bt" style="left:132px;top:534px;width:17px;height:17px"></div>
<svg class="arr" style="left:137px;top:541px" width="7" height="4" shape-rendering="crispEdges"><rect x="0" y="0" width="7" height="1"/><rect x="1" y="1" width="5" height="1"/><rect x="2" y="2" width="3" height="1"/><rect x="3" y="3" width="1" height="1"/></svg>
<div class="t" style="left:14px;top:536px">дирекции</div>
<div class="bt" style="left:10px;top:562px;width:141px;height:24px"></div>
<div class="t tc" style="left:10px;top:568px;width:141px"><span>аспектарные рецепции</span></div>
<div class="gb" style="left:158px;top:534px;width:128px;height:51px"></div>
<div class="t cap" style="left:166px;top:530px">аспекты</div>
<div class="cb" style="left:164px;top:542px"><svg class="ck" width="7" height="7" shape-rendering="crispEdges"><rect x="6" y="0" width="1" height="1"/><rect x="5" y="1" width="2" height="1"/><rect x="0" y="2" width="1" height="1"/><rect x="4" y="2" width="3" height="1"/><rect x="0" y="3" width="2" height="1"/><rect x="3" y="3" width="3" height="1"/><rect x="0" y="4" width="5" height="1"/><rect x="1" y="5" width="3" height="1"/><rect x="2" y="6" width="1" height="1"/></svg></div>
<div class="t" style="left:182px;top:542px">планета - планета</div>
<div class="cb" style="left:164px;top:555px"><svg class="ck" width="7" height="7" shape-rendering="crispEdges"><rect x="6" y="0" width="1" height="1"/><rect x="5" y="1" width="2" height="1"/><rect x="0" y="2" width="1" height="1"/><rect x="4" y="2" width="3" height="1"/><rect x="0" y="3" width="2" height="1"/><rect x="3" y="3" width="3" height="1"/><rect x="0" y="4" width="5" height="1"/><rect x="1" y="5" width="3" height="1"/><rect x="2" y="6" width="1" height="1"/></svg></div>
<div class="t" style="left:182px;top:556px">планета - дом</div>
<div class="cb" style="left:164px;top:568px"><svg class="ck" width="7" height="7" shape-rendering="crispEdges"><rect x="6" y="0" width="1" height="1"/><rect x="5" y="1" width="2" height="1"/><rect x="0" y="2" width="1" height="1"/><rect x="4" y="2" width="3" height="1"/><rect x="0" y="3" width="2" height="1"/><rect x="3" y="3" width="3" height="1"/><rect x="0" y="4" width="5" height="1"/><rect x="1" y="5" width="3" height="1"/><rect x="2" y="6" width="1" height="1"/></svg></div>
<div class="t" style="left:182px;top:570px">дом - дом</div>
<div class="sk" style="left:353px;top:37px;width:433px;height:522px;background:#fff"></div>
<div class="bt" style="left:685px;top:567px;width:102px;height:25px"></div>
<div class="t tc" style="left:685px;top:573px;width:102px"><span>копировать все</span></div></body></html>
